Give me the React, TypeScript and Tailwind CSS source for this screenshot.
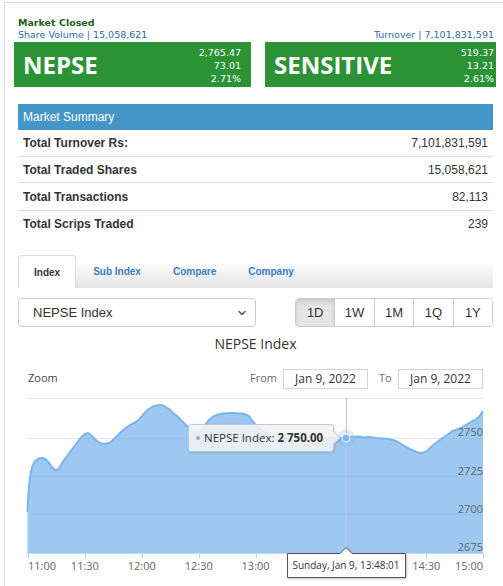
import { ChevronDown } from "lucide-react";

const summary = [
  { label: "Total Turnover Rs:", value: "7,101,831,591", h: "h-[27px]" },
  { label: "Total Traded Shares", value: "15,058,621", h: "h-[26px]" },
  { label: "Total Transactions", value: "82,113", h: "h-[28px]" },
  { label: "Total Scrips Traded", value: "239", h: "h-[26px]" },
];

const ranges = ["1D", "1W", "1M", "1Q", "1Y"];

// chart points in page coordinates
const pts: [number, number][] = [
  [27.5, 512], [28.5, 492], [30, 477], [32, 467], [35, 461], [39, 458.5], [43, 458], [46, 459.5],
  [49, 463], [52, 467], [55, 470], [58, 469.5], [61, 465], [64, 460], [67, 456], [70, 452],
  [73, 448], [76, 444], [79, 440], [82, 436.5], [85, 434], [88, 433], [91, 435], [94, 438],
  [97, 441], [100, 443], [103, 444], [106, 443.5], [109, 443], [112, 441], [115, 438],
  [118, 435], [121, 432], [124, 429.5], [127, 427], [130, 425], [133, 423.5], [136, 422],
  [139, 419.5], [142, 416], [145, 412.5], [148, 409.5], [151, 407.5], [154, 406], [157, 405.5],
  [160, 405], [163, 405.5], [166, 407], [169, 409], [172, 412], [175, 414.5], [178, 417],
  [181, 420], [184, 423], [187, 426], [191, 430], [196, 432], [201, 430], [205, 425],
  [209, 420], [213, 416.5], [218, 414.5], [223, 413.5], [229, 413], [235, 413], [240, 413.5],
  [245, 414], [249, 416], [252, 420], [255, 424], [260, 429], [266, 433], [274, 436],
  [284, 437], [296, 437.5], [310, 437], [322, 437.5], [334, 438], [346, 438], [352, 437],
  [358, 436.5], [364, 437.5], [370, 437], [376, 438], [382, 438.5], [388, 439], [393, 440],
  [398, 442], [402, 444.5], [406, 447], [410, 449], [414, 451], [418, 452.5], [422, 453],
  [425, 452], [428, 450], [431, 447], [434, 444.5], [437, 442], [441, 439], [445, 436.5],
  [449, 433.5], [453, 431], [457, 429.5], [461, 428], [465, 425.5], [469, 423], [473, 421],
  [477, 418.5], [480, 415.5], [483, 411],
];

// 13:30 and 14:00 sit under the hover tooltip, so they are not drawn
const xLabels = ["11:00", "11:30", "12:00", "12:30", "13:00", "", "", "14:30", "15:00"];

function Chart() {
  const line = pts.map(([x, y], i) => `${i ? "L" : "M"}${x} ${y}`).join(" ");
  const area = `M27.5 553 ${pts.map(([x, y]) => `L${x} ${y}`).join(" ")} L483 553 Z`;
  const font = "'Open Sans', sans-serif";
  return (
    <svg width={475} height={226} viewBox="18 360 475 226" fontFamily={font}>
      <text x={28} y={382} fontSize={11} fill="#444">Zoom</text>
      <text x={250} y={382} fontSize={11} fill="#666">From</text>
      <rect x={283.5} y={369.5} width={84} height={19} fill="#fff" stroke="#d4d4d4" />
      <text x={325.5} y={383} fontSize={12} fill="#333" textAnchor="middle">Jan 9, 2022</text>
      <text x={379} y={382} fontSize={11} fill="#666">To</text>
      <rect x={398.5} y={369.5} width={84} height={19} fill="#fff" stroke="#d4d4d4" />
      <text x={440.5} y={383} fontSize={12} fill="#333" textAnchor="middle">Jan 9, 2022</text>

      {[398.5, 438.5, 476.5, 514.5].map((y) => (
        <line key={y} x1={27} x2={483} y1={y} y2={y} stroke="#e6e6e6" />
      ))}
      <path d={area} fill="#7cb5ec" fillOpacity={0.75} />
      <path d={line} fill="none" stroke="#7cb5ec" strokeWidth={2} />
      <line x1={346.5} x2={346.5} y1={398} y2={553} stroke="#b9c8d8" />

      <line x1={27} x2={483} y1={553.5} y2={553.5} stroke="#ccd6eb" />
      {xLabels.map((_, i) => {
        const x = Math.round(28 + i * 56.9) + 0.5;
        return <line key={i} x1={x} x2={x} y1={553} y2={559} stroke="#ccd6eb" />;
      })}
      {xLabels.map((t, i) => {
        if (!t) return null;
        const x = 28 + i * 56.9;
        const anchor = i === 0 ? "start" : i === 8 ? "end" : "middle";
        return (
          <text key={t} x={i === 8 ? 483 : x} y={570} fontSize={11} fill="#666" textAnchor={anchor}>
            {t}
          </text>
        );
      })}

      {[
        ["2750", 436],
        ["2725", 475],
        ["2700", 513],
        ["2675", 551],
      ].map(([t, y]) => (
        <text key={t} x={483} y={y} fontSize={11} fill="#666" textAnchor="end">
          {t}
        </text>
      ))}

      <circle cx={346} cy={438} r={9} fill="#7cb5ec" fillOpacity={0.25} />
      <circle cx={346} cy={438} r={4} fill="#7cb5ec" stroke="#fff" strokeWidth={1} />

      <g style={{ filter: "drop-shadow(1px 1px 1px rgba(0,0,0,0.15))" }}>
        <path
          d="M191.5 424.5 H330.5 Q333.5 424.5 333.5 427.5 V432 L340 438 L333.5 444 V448.5 Q333.5 451.5 330.5 451.5 H191.5 Q188.5 451.5 188.5 448.5 V427.5 Q188.5 424.5 191.5 424.5 Z"
          fill="rgba(247,247,247,0.88)"
          stroke="#b3cbe3"
        />
      </g>
      <circle cx={198} cy={438} r={2} fill="#7cb5ec" />
      <text x={204} y={442} fontSize={11.5} fill="#333">
        NEPSE Index: <tspan fontWeight={700}>2 750.00</tspan>
      </text>

      <g style={{ filter: "drop-shadow(1px 1px 1px rgba(0,0,0,0.25))" }}>
        <path
          d="M287.5 553.5 H340 L346 547.5 L352 553.5 H405.5 V577.5 H287.5 Z"
          fill="#fff"
          stroke="#555"
        />
      </g>
      <text x={346} y={569} fontSize={10} fill="#333" textAnchor="middle">
        Sunday, Jan 9, 13:48:01
      </text>
    </svg>
  );
}

function IndexBox({ name, nums, w, pr }: { name: string; nums: string[]; w: string; pr: string }) {
  return (
    <div className={`${w} h-[45px] bg-[#2b9335] flex items-center justify-between`}>
      <span className="pl-[9px] font-['Open_Sans',sans-serif] font-bold text-[24px] leading-none text-white">
        {name}
      </span>
      <div className={`${pr} pt-[4px] self-start text-right text-white text-[9.5px] leading-[13px]`}>
        {nums.map((n) => (
          <div key={n}>{n}</div>
        ))}
      </div>
    </div>
  );
}

export default function App() {
  return (
    <div className="w-[503px] h-[586px] overflow-hidden bg-white">
      <div className="ml-[4px] mt-[2px] border-l border-t border-[#dedede] h-[600px]">
        <div className="pl-[9px] pt-[14px] font-['DejaVu_Sans',sans-serif]">
          <div className="flex gap-[14px]">
            <div className="w-[237px]">
              <div className="pl-[4px] text-[9.5px] leading-[12px] font-bold text-[#2a5a1c]">Market Closed</div>
              <div className="pl-[4px] text-[9.5px] leading-[12px] text-[#2f6aae]">Share Volume | 15,058,621</div>
              <div className="mt-[1px]">
                <IndexBox name="NEPSE" nums={["2,765.47", "73.01", "2.71%"]} w="w-[237px]" pr="pr-[10px]" />
              </div>
            </div>
            <div className="w-[231px]">
              <div className="h-[12px]" />
              <div className="pr-[2px] text-right text-[9.5px] leading-[12px] text-[#2f6aae]">
                Turnover | 7,101,831,591
              </div>
              <div className="mt-[1px]">
                <IndexBox name="SENSITIVE" nums={["519.37", "13.21", "2.61%"]} w="w-[231px]" pr="pr-[2px]" />
              </div>
            </div>
          </div>
        </div>

        <div className="ml-[13px] w-[475px] font-['Liberation_Sans',Arial,sans-serif]">
          <div className="mt-[17px]">
            <div className="h-[26px] bg-[#4596c8] flex items-center pl-[5px] text-white text-[12px]">
              Market Summary
            </div>
            {summary.map((r, i) => (
              <div
                key={r.label}
                className={`${r.h} flex items-center justify-between px-[5px] text-[12px] text-[#333] ${
                  i < summary.length - 1 ? "border-b border-[#dddddd]" : ""
                }`}
              >
                <span className="font-bold">{r.label}</span>
                <span>{r.value}</span>
              </div>
            ))}
          </div>

          <div className="mt-[18px] h-[33px] flex items-stretch gap-[2px] bg-linear-to-b from-white from-[20%] to-[#e3e3e3] text-[10px] font-bold">
            <div className="px-[15px] flex items-center bg-white border border-b-0 border-[#dddddd] rounded-t-[4px] text-[#333]">
              Index
            </div>
            {["Sub Index", "Compare", "Company"].map((t) => (
              <div key={t} className="px-[15px] flex items-center text-[#3b7dc0]">
                {t}
              </div>
            ))}
          </div>

          <div className="mt-[10px] flex justify-between">
            <div className="w-[238px] h-[29px] border border-[#cccccc] rounded-[4px] flex items-center justify-between pl-[14px] pr-[7px] text-[13px] text-[#333]">
              <span>NEPSE Index</span>
              <ChevronDown size={12} strokeWidth={3} className="text-[#555]" />
            </div>
            <div className="w-[198px] h-[29px] flex border border-[#cccccc] rounded-[4px] overflow-hidden text-[13px] text-[#333]">
              {ranges.map((r, i) => (
                <div
                  key={r}
                  className={`flex-1 flex items-center justify-center ${i > 0 ? "border-l border-[#cccccc]" : ""} ${
                    i === 0 ? "bg-[#e6e6e6] shadow-[inset_0_3px_5px_rgba(0,0,0,0.125)]" : "bg-white"
                  }`}
                >
                  {r}
                </div>
              ))}
            </div>
          </div>

          <div className="mt-[9px] h-[16px] leading-[16px] text-center text-[14px] text-[#333] font-['Open_Sans',sans-serif]">
            NEPSE Index
          </div>

          <div className="mt-[8px]">
            <Chart />
          </div>
        </div>
      </div>
    </div>
  );
}
